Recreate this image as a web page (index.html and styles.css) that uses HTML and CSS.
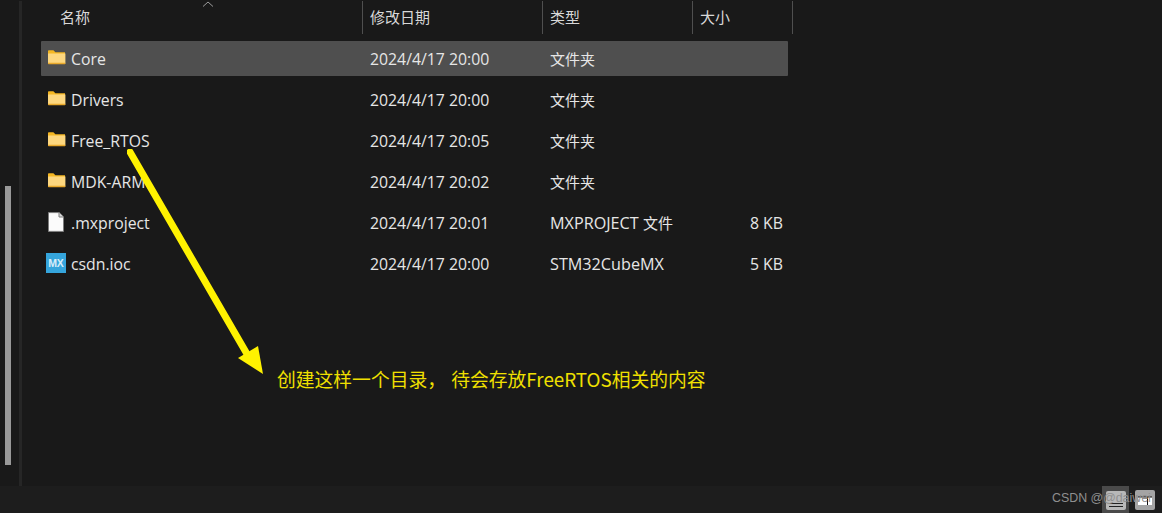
FILE: index.html
```html
<!DOCTYPE html>
<html>
  <head>
  <title>文件夹</title>
  <meta charset="utf-8">
  <link rel="stylesheet" href="styles.css">
  </head>
  <body>

    <svg class="defs" width="0" height="0">
      <symbol id="folder" viewBox="0 0 20 20">
        <path d="M2 3.2C2 2.6 2.4 2.2 3 2.2h4.4l2 2H19v3H2Z" fill="#f5b722"/>
        <path d="M2 5.4h17.4V15c0 .6-.4 1-1 1H3c-.6 0-1-.4-1-1Z" fill="#fdd77f"/>
        <path d="M2 14.8h17.4v.4c0 .6-.4 1-1 1H3c-.6 0-1-.4-1-1Z" fill="#e9a92b"/>
      </symbol>
      <symbol id="doc" viewBox="0 0 20 20">
        <path d="M2.5 0.6h10.5L17.5 5v14.4h-15Z" fill="#fbfbfb" stroke="#7d7d7d" stroke-width="1"/>
        <path d="M13 .6V5h4.5" fill="#d8d8d8" stroke="#7d7d7d" stroke-width="1"/>
      </symbol>
    </svg>

    <div class="window">

      <div class="main">
        <div class="nav-pane"><span class="nav-thumb"></span></div>
        <div class="nav-split"></div>

        <div class="files">
          <span class="sort-arrow">
            <svg width="12" height="6" viewBox="0 0 12 6"><path d="M1 5.5 6 1l5 4.5" fill="none" stroke="#9a9a9a" stroke-width="1"/></svg>
          </span>

          <div class="head">
            <div class="head-cell col-name">名称</div>
            <div class="head-cell col-date">修改日期</div>
            <div class="head-cell col-type">类型</div>
            <div class="head-cell col-size">大小</div>
          </div>

          <ul class="rows">
            <li class="row selected">
              <span class="col-name"><svg class="icon"><use href="#folder"/></svg>Core</span>
              <span class="col-date">2024/4/17 20:00</span>
              <span class="col-type"><span class="cjk">文件夹</span></span>
              <span class="col-size"></span>
            </li>
            <li class="row">
              <span class="col-name"><svg class="icon"><use href="#folder"/></svg>Drivers</span>
              <span class="col-date">2024/4/17 20:00</span>
              <span class="col-type"><span class="cjk">文件夹</span></span>
              <span class="col-size"></span>
            </li>
            <li class="row">
              <span class="col-name"><svg class="icon"><use href="#folder"/></svg>Free_RTOS</span>
              <span class="col-date">2024/4/17 20:05</span>
              <span class="col-type"><span class="cjk">文件夹</span></span>
              <span class="col-size"></span>
            </li>
            <li class="row">
              <span class="col-name"><svg class="icon"><use href="#folder"/></svg>MDK-ARM</span>
              <span class="col-date">2024/4/17 20:02</span>
              <span class="col-type"><span class="cjk">文件夹</span></span>
              <span class="col-size"></span>
            </li>
            <li class="row">
              <span class="col-name"><svg class="icon"><use href="#doc"/></svg>.mxproject</span>
              <span class="col-date">2024/4/17 20:01</span>
              <span class="col-type">MXPROJECT <span class="cjk">文件</span></span>
              <span class="col-size">8 KB</span>
            </li>
            <li class="row">
              <span class="col-name">
                <svg class="icon" viewBox="0 0 20 20">
                  <rect width="20" height="20" fill="#35a5dc"/>
                  <text x="10" y="13.5" text-anchor="middle" font-family="Liberation Sans" font-weight="700" font-size="10.5" fill="#d8eef9">MX</text>
                </svg>csdn.ioc</span>
              <span class="col-date">2024/4/17 20:00</span>
              <span class="col-type">STM32CubeMX</span>
              <span class="col-size">5 KB</span>
            </li>
          </ul>
        </div>
      </div>

      <div class="status">
        <span class="view-btn active">
          <svg width="20" height="20" viewBox="0 0 20 20"><rect y="1" width="20" height="19" rx="2" fill="#b8b8b8"/><rect x="3" y="13" width="14" height="1" fill="#222"/><rect x="3" y="16" width="14" height="1" fill="#222"/></svg>
        </span>
        <span class="view-btn">
          <svg width="20" height="20" viewBox="0 0 20 20"><rect width="20" height="20" rx="2" fill="#a4a4a4"/><rect x="3" y="7" width="14" height="8" fill="#fff"/><path d="M3 7h14M12.5 7v8" stroke="#111" stroke-width="1"/></svg>
        </span>
        <span class="watermark">CSDN @@daiwei</span>
      </div>

    </div>

    <!-- annotation drawn on top of the list -->
    <svg class="arrow" width="300" height="260" viewBox="0 0 300 260">
      <path d="M3 3 120 205" fill="none" stroke="#fff200" stroke-width="7" stroke-linecap="round"/>
      <path d="M136 225 131 197 111 209Z" fill="#fff200"/>
    </svg>
    <div class="note">创建这样一个目录， 待会存放FreeRTOS相关的内容</div>

  </body>
</html>
```

FILE: styles.css
```css
html,
body
{
  margin: 0;
  padding: 0;
  height: 100%;
  overflow: hidden;
  background-color: #191919;
}

body
{
  position: relative;
  color: #e6e6e6;
  font-family: "Open Sans", "Noto Sans CJK SC", sans-serif;
  font-size: 15.8px;
}

.window
{
  display: flex;
  flex-direction: column;
  height: 513px;
}

.main
{
  display: flex;
  flex: 1;
  min-height: 0;
}

/* Left navigation pane, only its scrollbar shows */
.nav-pane
{
  width: 19px;
  padding-top: 186px;
  box-sizing: border-box;
}
.nav-thumb
{
  display: block;
  width: 6px;
  height: 279px;
  margin-left: 5px;
  background-color: #999;
}
.nav-split
{
  width: 3px;
  margin-top: 1px;
  background-color: #262626;
}

.files
{
  position: relative;
  flex: 1;
  padding-left: 19px;
}

.sort-arrow
{
  position: absolute;
  left: 180px;
  top: 1px;
  line-height: 0;
}

.head
{
  display: flex;
  height: 33px;
  margin-top: 1px;
  margin-bottom: 7px;
}
.head-cell
{
  box-sizing: border-box;
  line-height: 32px;
  border-right: 1px solid #4f4f4f;
  color: #d8d8d8;
  font-size: 15px;
}
.head .col-name
{
  width: 322px;
  padding-left: 19px;
}
.head .col-date
{
  width: 180px;
  padding-left: 7px;
}
.head .col-type
{
  width: 150px;
  padding-left: 7px;
}
.head .col-size
{
  width: 100px;
  padding-left: 7px;
}

ul.rows
{
  list-style-type: none;
  margin: 0;
  padding: 0;
  width: 747px;
}
.row
{
  display: flex;
  align-items: center;
  height: 35px;
  margin-bottom: 6px;
}
.row.selected
{
  background-color: #4f4f4f;
  border-radius: 1px;
}
.row .col-name
{
  display: flex;
  align-items: center;
  width: 322px;
  padding-left: 5px;
  box-sizing: border-box;
}
.row .col-date
{
  width: 180px;
  padding-left: 7px;
  box-sizing: border-box;
}
.row .col-type
{
  width: 150px;
  padding-left: 7px;
  box-sizing: border-box;
  font-size: 16.2px;
}
.row .col-type .cjk
{
  font-size: 15px;
}
.row .col-size
{
  flex: 1;
  padding-right: 5px;
  text-align: right;
}

svg.icon
{
  width: 20px;
  height: 20px;
  margin-right: 5px;
  flex: none;
  position: relative;
  top: -1px;
}

.status
{
  display: flex;
  align-items: flex-start;
  justify-content: flex-end;
  height: 27px;
  padding-right: 4px;
  background-color: #1d1d1d;
  position: relative;
}
.view-btn
{
  display: flex;
  justify-content: center;
  box-sizing: border-box;
  width: 27px;
  height: 27px;
  padding-top: 4px;
  line-height: 0;
}
.view-btn.active
{
  background-color: #4a4a4a;
  margin-right: 2px;
}
.watermark
{
  position: absolute;
  left: 1052px;
  top: 5px;
  color: #8f8f8f;
  font-family: "Liberation Sans", sans-serif;
  font-size: 12.4px;
  white-space: nowrap;
}

/* Annotation over the list */
svg.arrow
{
  position: absolute;
  left: 127px;
  top: 149px;
}
.note
{
  position: absolute;
  left: 277px;
  top: 366px;
  color: #f0e000;
  font-family: "Noto Sans CJK SC", sans-serif;
  font-size: 18.8px;
  word-spacing: 1px;
  line-height: 26px;
  white-space: pre;
}

svg.defs
{
  position: absolute;
}
```
